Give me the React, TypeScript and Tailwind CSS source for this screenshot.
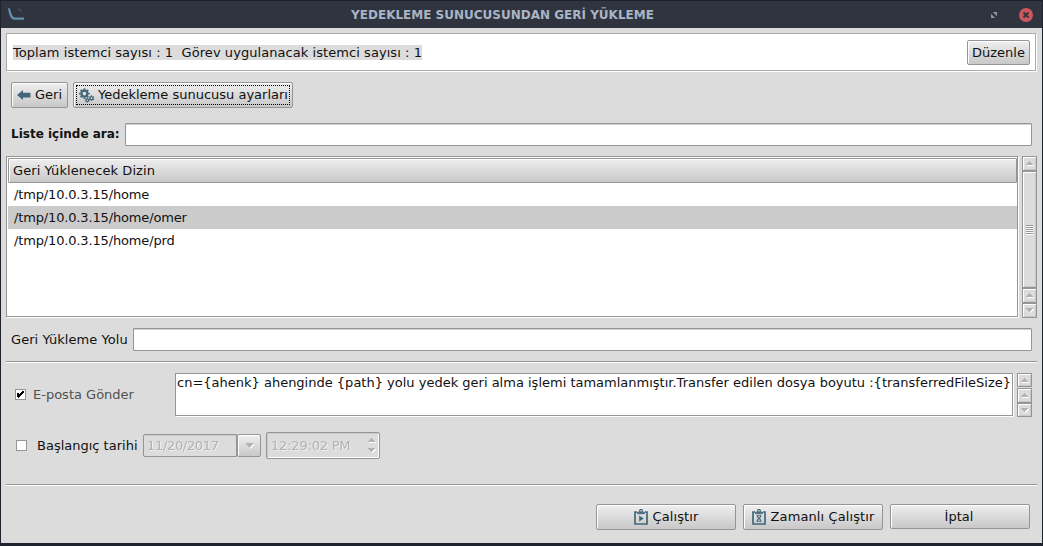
import type { ReactNode } from "react";

const bevel =
  "rounded-[2px] border border-[#959595] bg-linear-to-b from-[#efefef] to-[#c8c8c8] shadow-[inset_1px_1px_0_#fff]";
const field = "rounded-[1px] border border-[#959595] bg-white shadow-[inset_0_1px_0_#d0d0d0]";

function Arrow({ down = false }: { down?: boolean }) {
  return (
    <svg width="7" height="5" viewBox="0 0 7 5" shapeRendering="crispEdges" className="overflow-visible">
      {down ? (
        <>
          <path d="M1 1H8L4.5 5Z" fill="#fff" />
          <path d="M0 0H7V1H6V2H5V3H4V4H3V3H2V2H1V1H0Z" fill="#b2b2b2" />
        </>
      ) : (
        <>
          <path d="M1 4H8V5H1Z" fill="#fff" />
          <path d="M3 0H4V1H5V2H6V3H7V4H0V3H1V2H2V1H3Z" fill="#b2b2b2" />
        </>
      )}
    </svg>
  );
}

function ScrollButton({ down = false, className }: { down?: boolean; className: string }) {
  return (
    <div
      className={`flex w-[15px] items-center justify-center border border-[#959595] bg-[#dcdcdc] shadow-[inset_1px_1px_0_#fff,inset_-1px_-1px_0_#c8c8c8] ${className}`}
    >
      <Arrow down={down} />
    </div>
  );
}

function Separator({ className }: { className: string }) {
  return <div className={`h-[2px] w-[1031px] border-b border-white bg-[#959595] ${className}`} />;
}

function BackIcon() {
  return (
    <svg width="14" height="10" viewBox="0 0 14 10" fill="#42667a">
      <path d="M0 5L6 0V2.7H13.5V7.4H6V10Z" />
    </svg>
  );
}

function Gear({ cx, cy, r, teeth, hole, tooth }: { cx: number; cy: number; r: number; teeth: number; hole: number; tooth: number }) {
  return (
    <g transform={`translate(${cx} ${cy})`} fill="none" stroke="#42667a">
      <circle r={(r + hole) / 2} strokeWidth={r - hole} />
      {Array.from({ length: teeth }, (_, i) => (
        <path key={i} d={`M0 ${-r + 0.3}V${-r - tooth}`} strokeWidth={tooth * 1.6} transform={`rotate(${(i * 360) / teeth})`} />
      ))}
    </g>
  );
}

function GearsIcon() {
  return (
    <svg width="16" height="15" viewBox="0 0 16 15">
      <Gear cx={5.4} cy={5.6} r={4.1} teeth={8} hole={1.9} tooth={1.2} />
      <Gear cx={8.3} cy={12.2} r={1.9} teeth={6} hole={0.7} tooth={0.6} />
      <Gear cx={12.5} cy={10.2} r={2.2} teeth={6} hole={0.9} tooth={0.7} />
    </svg>
  );
}

function ClipboardIcon({ children }: { children: ReactNode }) {
  return (
    <svg width="14" height="16" viewBox="0 0 14 16" fill="none" stroke="#42667a">
      <path d="M3 3H1V15H13V3H11" strokeWidth="1.7" />
      <path d="M3.6 4.7V3.2H10.4V4.7Z" fill="#7b95a2" strokeWidth="1" />
      <circle cx="7" cy="1.9" r="1.4" strokeWidth="1.2" />
      {children}
    </svg>
  );
}

function AppLogo() {
  return (
    <svg width="17" height="13" viewBox="0 0 17 13" fill="none">
      <path d="M0 .3H2C3 5 4.4 9.4 7 9.5H16V11.8H6.5C2.6 11.8 .8 6.5 0 .3Z" fill="#6092aa" />
      <path d="M9.5 1.5Q12.5.5 13.2 4" stroke="#3b5261" strokeWidth="1.4" />
    </svg>
  );
}

function TitleBar() {
  return (
    <header className="flex h-7 items-center border-t border-[#1d2029] bg-[#2f343f] pl-[7px] pr-[9px]">
      <div className="w-[86px]">
        <AppLogo />
      </div>
      <h1 className="flex-1 pr-[36px] text-center text-[12px] font-bold leading-none text-[#a9b5c5]">
        YEDEKLEME SUNUCUSUNDAN GERİ YÜKLEME
      </h1>
      <div className="flex w-[86px] items-center justify-end gap-[22px]">
        <svg width="6" height="6" viewBox="0 0 6 6" fill="#8f96a3">
          <path d="M1.8 0H6V4.2ZM0 1.8V6H4.2Z" />
        </svg>
        <svg width="14" height="14" viewBox="0 0 14 14">
          <circle cx="7" cy="7" r="7" fill="#cc575d" />
          <path d="M4.5 4.5L9.5 9.5M9.5 4.5L4.5 9.5" stroke="#2f343f" strokeWidth="1.9" />
        </svg>
      </div>
    </header>
  );
}

const paths = ["/tmp/10.0.3.15/home", "/tmp/10.0.3.15/home/omer", "/tmp/10.0.3.15/home/prd"];

export default function App() {
  return (
    <div className="flex h-[546px] w-[1043px] flex-col overflow-hidden whitespace-pre border-x border-b-[3px] border-[#1f232d] bg-[#dcdcdc] font-['DejaVu_Sans',sans-serif] text-[13px] leading-[15px] text-[#111]">
      <TitleBar />
      <main className="flex flex-col pl-[5px]">
        <section className="mt-[5px] flex h-[38px] w-[1030px] items-center justify-between border border-[#aaa] bg-white pl-[6px] pr-[5px] shadow-[1px_1px_0_#fff]">
          <p className="bg-[#dcdcdc] tracking-[0.06px]">Toplam istemci sayısı : 1  Görev uygulanacak istemci sayısı : 1</p>
          <button className={`h-[25px] w-[63px] ${bevel}`}>Düzenle</button>
        </section>

        <div className="mt-[11px] flex gap-[5px] pl-[5px]">
          <button className={`flex h-[26px] w-[57px] items-center gap-[4px] pl-[5px] ${bevel}`}>
            <BackIcon />
            <span className="pb-[2px]">Geri</span>
          </button>
          <button className={`h-[26px] w-[220px] p-[2px] ${bevel}`}>
            <span className="flex h-[20px] items-center gap-[3px] border border-dotted border-black pl-[2px]">
              <GearsIcon />
              <span className="pb-[2px]">Yedekleme sunucusu ayarları</span>
            </span>
          </button>
        </div>

        <label className="mt-[15px] flex h-[23px] items-center justify-between pl-[5px] pr-[10px]">
          <span className="pb-px text-[12px] font-bold">Liste içinde ara:</span>
          <input className={`h-[23px] w-[907px] outline-none ${field}`} />
        </label>

        <section className="mt-[10px] flex gap-1">
          <div className="h-[161px] w-[1012px] border border-[#959595] bg-white pl-px pt-px shadow-[1px_1px_0_#fff]">
            <div className="flex h-[25px] w-[1009px] items-center rounded-[1px] border border-[#959595] bg-linear-to-b from-[#efefef] to-[#c8c8c8] pl-1 tracking-[0.08px] shadow-[inset_1px_1px_0_#fff]">
              Geri Yüklenecek Dizin
            </div>
            {paths.map((path, index) => (
              <div
                key={path}
                className={`flex h-[23px] items-center pl-[6px] tracking-[-0.15px] ${index === 1 ? "bg-[#cbcbcb]" : ""}`}
              >
                {path}
              </div>
            ))}
          </div>
          <div className="flex h-[162px] flex-col">
            <ScrollButton className="h-[15px]" />
            <div className="flex h-[117px] w-[15px] items-center justify-center border border-[#959595] bg-[#dcdcdc] shadow-[inset_1px_1px_0_#fff,inset_-1px_-1px_0_#c8c8c8]">
              <div className="flex flex-col">
                {[0, 1, 2, 3, 4].map((line) => (
                  <div key={line} className="h-[2px] w-[7px] border-b border-white bg-[#959595]" />
                ))}
              </div>
            </div>
            <ScrollButton className="h-[15px]" />
            <ScrollButton down className="h-[15px]" />
          </div>
        </section>

        <label className="mt-[10px] flex h-[23px] items-center justify-between pl-[5px] pr-[10px]">
          <span className="tracking-[0.06px]">Geri Yükleme Yolu</span>
          <input className={`h-[23px] w-[899px] outline-none ${field}`} />
        </label>

        <Separator className="mt-[10px]" />

        <section className="mt-[10px] flex h-[44px]">
          <div className="flex w-[169px] items-center gap-[7px] pb-[2px] pl-[9px] text-[#505050]">
            <div className="h-[11px] w-[11px] border border-[#959595] bg-white">
              <svg width="9" height="9" viewBox="0 0 9 9">
                <path d="M1 3H3V4H4V3H5V2H6V1H8V3H7V4H6V5H5V6H4V7H3V8H2V7H1Z" fill="#000" shapeRendering="crispEdges" />
              </svg>
            </div>
            <span>E-posta Gönder</span>
          </div>
          <div className="h-[43px] w-[838px] border border-[#959595] bg-white pl-px pt-px shadow-[1px_1px_0_#fff]">
            {"cn={ahenk} ahenginde {path} yolu yedek geri alma işlemi tamamlanmıştır.Transfer edilen dosya boyutu :{transferredFileSize}"}
          </div>
          <div className="ml-1 flex flex-col">
            <ScrollButton className="h-[14px]" />
            <ScrollButton className="mt-px h-[15px]" />
            <ScrollButton down className="h-[14px]" />
          </div>
        </section>

        <section className="mt-[15px] flex h-[27px] items-center pl-[10px]">
          <div className="h-[11px] w-[11px] border border-[#959595] bg-white" />
          <span className="w-[116px] pl-[10px]">Başlangıç tarihi</span>
          <div className="flex h-[23px] w-[118px] text-[#b2b2b2]">
            <div className="flex w-[94px] items-center rounded-l-[2px] border border-[#959595] pl-[3px] tracking-[-0.32px] shadow-[inset_0_1px_0_#cbcbcb]">
              <span className="drop-shadow-[1px_1px_0_#eee]">11/20/2017</span>
            </div>
            <div className={`flex w-6 items-center justify-center ${bevel}`}>
              <svg width="9" height="6" viewBox="0 0 9 6">
                <path d="M1 1H10L5.5 6Z" fill="#fff" />
                <path d="M0 0H9L4.5 5Z" fill="#b2b2b2" />
              </svg>
            </div>
          </div>
          <div className="ml-[5px] flex h-[27px] w-[114px] items-center justify-between rounded-[2px] border border-[#959595] pl-1 pr-[4px] text-[#b2b2b2] shadow-[inset_1px_1px_0_#cbcbcb,inset_-1px_-1px_0_#fff]">
            <span className="tracking-[-0.2px] drop-shadow-[1px_1px_0_#eee]">12:29:02 PM</span>
            <div className="flex flex-col gap-[5px]">
              <Arrow />
              <Arrow down />
            </div>
          </div>
        </section>

        <Separator className="mt-[25px]" />

        <footer className="mt-[18px] flex gap-[7px] pl-[590px]">
          <button className={`flex h-[26px] w-[140px] items-center justify-center gap-[5px] ${bevel}`}>
            <ClipboardIcon>
              <path d="M5.2 6.6L9.8 9.5L5.2 12.4Z" fill="#42667a" stroke="none" />
            </ClipboardIcon>
            <span className="pb-[2px] tracking-[0.1px]">Çalıştır</span>
          </button>
          <button className={`flex h-[26px] w-[140px] items-center justify-center gap-[5px] ${bevel}`}>
            <ClipboardIcon>
              <path d="M4.5 6.7H9.5M4.5 12.2H9.5M5.2 7Q5.4 8.5 7 9.4Q8.6 10 8.8 12M8.8 7Q8.6 8.5 7 9.4Q5.4 10 5.2 12" strokeWidth="1.1" />
            </ClipboardIcon>
            <span className="pb-[2px] tracking-[0.1px]">Zamanlı Çalıştır</span>
          </button>
          <button className={`h-[25px] w-[140px] pr-[2px] ${bevel}`}>İptal</button>
        </footer>
      </main>
    </div>
  );
}
